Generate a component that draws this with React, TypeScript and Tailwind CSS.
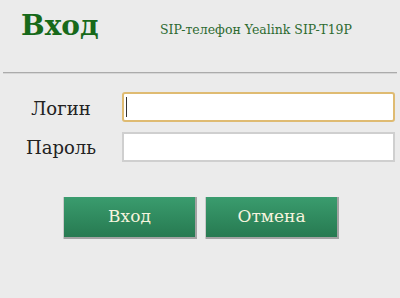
import { useState } from 'react'

export default function App() {
  const [login, setLogin] = useState('')
  const [password, setPassword] = useState('')

  return (
    <div className="w-[400px] h-[298px] bg-[#ebebeb] overflow-hidden font-['DejaVu_Serif','Liberation_Serif',serif]">
      <div className="flex items-start h-[72px] pt-[12px]">
        <h1 className="w-[160px] pl-[21px] text-[28px] font-bold text-[#17691a] leading-none">Вход</h1>
        <span className="mt-[12px] text-[12.5px] text-[#2d6a30] leading-none">SIP-телефон Yealink SIP-T19P</span>
      </div>
      <div className="mx-[3px] h-[2px] bg-[#ababab] border-b border-[#d6d6d6]" />

      <div className="flex flex-col gap-[10px] mt-[18px]">
        <div className="flex items-center">
          <label className="w-[122px] text-center text-[18px] text-[#222] mt-[2px]">Логин</label>
          <div className="relative">
            <input
              autoFocus
              value={login}
              onChange={e => setLogin(e.target.value)}
              className="w-[273px] h-[30px] bg-white border-2 border-[#dfbb72] rounded-[3px] px-[3px] text-[15px] outline-none"
            />
            {login === '' && <span className="absolute left-[4px] top-[5px] w-px h-[20px] bg-[#333]" />}
          </div>
        </div>
        <div className="flex items-center">
          <label className="w-[122px] text-center text-[18px] text-[#222]">Пароль</label>
          <input
            type="password"
            value={password}
            onChange={e => setPassword(e.target.value)}
            className="w-[273px] h-[30px] bg-white border-2 border-[#cfcfcf] px-[3px] text-[15px] outline-none"
          />
        </div>
      </div>

      <div className="flex gap-[9px] pl-[64px] mt-[35px]">
        <button className="w-[133px] h-[42px] bg-gradient-to-b from-[#3a9c6e] to-[#277a51] text-[#f6f4de] text-[17px] border-b-2 border-r-2 border-[#a3a3a3] shadow-[-1px_0_0_#c9c9c9]">
          Вход
        </button>
        <button className="w-[133px] h-[42px] bg-gradient-to-b from-[#3a9c6e] to-[#277a51] text-[#f6f4de] text-[17px] border-b-2 border-r-2 border-[#a3a3a3] shadow-[-1px_0_0_#c9c9c9]">
          Отмена
        </button>
      </div>
    </div>
  )
}
